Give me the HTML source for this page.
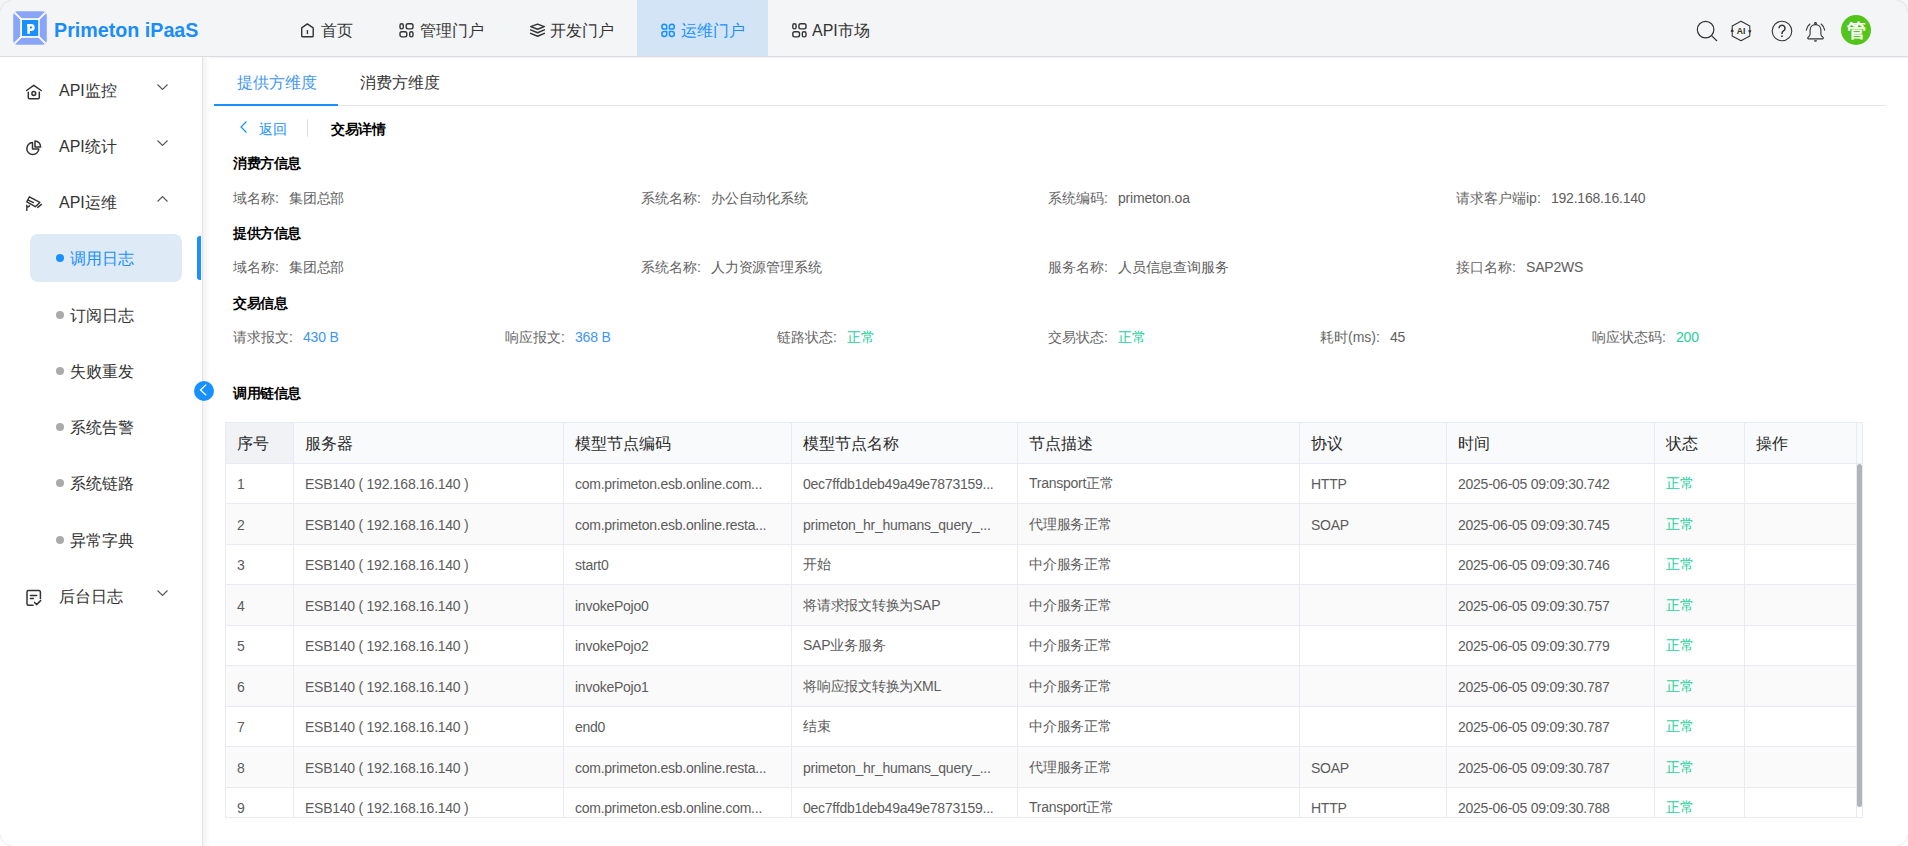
<!DOCTYPE html>
<html><head><meta charset="utf-8">
<style>
*{box-sizing:border-box;margin:0;padding:0}
html,body{width:1908px;height:846px;overflow:hidden;background:#fff;font-family:"Liberation Sans",sans-serif;color:#333}
.abs{position:absolute}
#hdr{position:absolute;left:0;top:0;width:1908px;height:57px;background:#f4f5f7;border-bottom:1px solid #dcdcde;box-shadow:0 1px 1px rgba(40,60,120,.06)}
.brand{position:absolute;left:54px;top:17px;font-weight:bold;font-size:19.7px;line-height:26px;color:#1a8cfb;white-space:nowrap}
.nav{position:absolute;top:0;height:56px;padding-top:4px!important;display:flex;align-items:center;font-size:16px;color:#333;white-space:nowrap}
.nav svg{display:block;margin-right:5px}
.nav.act{background:#d3e4f7;color:#1890ff}
#side{position:absolute;left:0;top:57px;width:202px;height:789px;background:#fff}
#sideb{position:absolute;left:202px;top:57px;width:8px;height:789px;background:linear-gradient(to right,#e3e3e3 0,#e3e3e3 1px,#f3f3f3 1px,#fff 8px)}
.mi{position:absolute;left:0;width:202px;height:24px;font-size:16px;line-height:24px;color:#333;white-space:nowrap}
.mi .ic{position:absolute;left:26px;top:4px}
.mi .tx{position:absolute;left:59px;top:1px}
.mi .chev{position:absolute;left:157px;top:6px}
.sub{position:absolute;left:30px;width:152px;height:48px;font-size:16px;line-height:48px;color:#333;white-space:nowrap;border-radius:8px}
.sub .dot{position:absolute;left:25.5px;top:20px;width:8px;height:8px;border-radius:50%;background:#aaa}
.sub .tx{position:absolute;left:40px;top:1px}
.sub.act{background:#dfeaf7;color:#1890ff}
.sub.act .dot{background:#1890ff}
.tab{position:absolute;top:71px;font-size:16px;line-height:24px;color:#333;white-space:nowrap}
.title{position:absolute;left:233px;font-size:14px;font-weight:bold;color:#000;line-height:21px;white-space:nowrap;transform:scale(.965);transform-origin:0 50%}
.fld{position:absolute;font-size:14px;line-height:20px;color:#666;white-space:nowrap}
.fld b{font-weight:normal;color:#5e5e5e;letter-spacing:-.2px}
.fld i.c{font-style:normal;display:inline-block;width:14px}
.blue{color:#3e95f5!important}
.green{color:#1dd09a!important}
#tbl{position:absolute;left:225px;top:422px;width:1638px;height:396px;border:1px solid #e8ebf3;overflow:hidden;background:#fff}
table{border-collapse:separate;border-spacing:0;table-layout:fixed;font-size:14px;color:#5c5c5c;width:1636px}
td,th{border-right:1px solid #e8ebf3;border-bottom:1px solid #e8ebf3;padding:0 0 0 11px;text-align:left;white-space:nowrap;overflow:hidden;font-weight:normal;vertical-align:middle}
td:last-child,th:last-child{border-right:0;padding:0}
th{height:41px;background:#f9fafb;font-size:16px;color:#2a2a2a;padding-top:2px}
td{letter-spacing:-.25px;padding-top:1px}
tr.h40 td{height:40px}
tr.h41 td{height:41px}
tr.odd td{background:#fafafa}
</style></head><body>

<div id="hdr">
  <svg class="abs" style="left:13px;top:11px" width="34" height="34" viewBox="0 0 34 34">
    <rect x="0.2" y="0.2" width="33.6" height="33.6" rx="4.5" fill="#8aa5f7"/>
    <path d="M1.6 1.6L32.4 32.4M32.4 1.6L1.6 32.4" stroke="#fbfcfd" stroke-width="2"/>
    <rect x="7.2" y="7.2" width="19.6" height="19.6" fill="#fbfcfd"/>
    <rect x="9" y="9" width="16.2" height="16" fill="#1890ff"/>
    <path d="M15.6 22.8V13" stroke="#fff" stroke-width="2.6"/>
    <path d="M14.5 14.2H18.2A2.3 2.3 0 0 1 18.2 18.8H15.6" fill="none" stroke="#fff" stroke-width="2.5"/>
  </svg>
  <div class="brand">Primeton iPaaS</div>

  <div class="nav" style="left:277px;padding:0 23px">
    <svg width="16" height="16" viewBox="0 0 16 16" fill="none" stroke="#333" stroke-width="1.4" stroke-linejoin="round" stroke-linecap="round"><path d="M1.7 5.9L7.3 1.9l5.9 4v8a.9.9 0 0 1-.9.9H2.6a.9.9 0 0 1-.9-.9z"/><path d="M7.4 8.6v3"/></svg><span style="position:relative;top:1px">首页</span></div>
  <div class="nav" style="left:376px;padding:0 23px">
    <svg width="16" height="16" viewBox="0 0 16 16" fill="none" stroke="#333" stroke-width="1.4"><rect x="1" y="1.8" width="3.3" height="5.1" rx="1.6"/><rect x="7.2" y="1.8" width="6.8" height="5.1" rx="1.8"/><rect x="1" y="9.7" width="6.8" height="5.2" rx="1.8"/><rect x="10.7" y="9.7" width="3.3" height="5.2" rx="1.6"/></svg><span style="position:relative;top:1px">管理门户</span></div>
  <div class="nav" style="left:506px;padding:0 23px">
    <svg width="16" height="16" viewBox="0 0 16 16" fill="none" stroke="#333" stroke-width="1.5" stroke-linejoin="round" stroke-linecap="round"><path d="M8.6 2.1L15.3 4.6 8.6 7.3 1.7 4.6z"/><path d="M1.7 7.9l6.9 2.8 6.7-2.8"/><path d="M1.7 11.4l6.9 2.9 6.7-2.9"/></svg><span style="position:relative;top:1px">开发门户</span></div>
  <div class="nav act" style="left:637px;width:131px;padding:0 23px 0 24px">
    <svg width="16" height="16" viewBox="0 0 16 16" fill="none" stroke="#1890ff" stroke-width="1.6" stroke-linejoin="round"><path d="M6.1 7H3.5A2.6 2.6 0 1 1 6.1 4.4z"/><path d="M9 7V4.4A2.6 2.6 0 1 1 11.6 7z"/><path d="M6.1 9.7v2.6A2.6 2.6 0 1 1 3.5 9.7z"/><path d="M9 9.7h2.6A2.6 2.6 0 1 1 9 12.3z"/></svg><span style="position:relative;top:1px">运维门户</span></div>
  <div class="nav" style="left:768px;padding:0 23px">
    <svg width="16" height="16" viewBox="0 0 16 16" fill="none" stroke="#333" stroke-width="1.4"><rect x="1.8" y="1.8" width="3.3" height="5.1" rx="1.6"/><rect x="7.9" y="1.8" width="7.1" height="5.1" rx="1.8"/><rect x="1.8" y="9.7" width="6.7" height="5.2" rx="1.8"/><rect x="11.3" y="9.7" width="3.7" height="5.2" rx="1.6"/></svg><span style="position:relative;top:1px">API市场</span></div>

  <!-- right icons -->
  <svg class="abs" style="left:1696px;top:20px" width="22" height="22" viewBox="0 0 22 22" fill="none" stroke="#333" stroke-width="1.2"><circle cx="9.6" cy="9.6" r="8.3"/><path d="M15.6 15.6L21 21"/></svg>
  <svg class="abs" style="left:1730px;top:20px" width="22" height="22" viewBox="0 0 22 22" fill="none" stroke="#333" stroke-width="1.05" stroke-linejoin="round">
    <path d="M2.2 9V6L11 1.2 19.8 6v5.5M19.8 13v3L11 20.8 2.2 16v-5.5"/>
    <path d="M1.2 11.3L2.2 9.3 3.2 11.3z" fill="#333"/>
    <path d="M18.8 10.7L19.8 12.7 20.8 10.7z" fill="#333"/>
    <text x="11" y="14.4" font-family="Liberation Sans" font-weight="bold" font-size="8.6" fill="#333" stroke="none" text-anchor="middle">AI</text></svg>
  <svg class="abs" style="left:1771px;top:20px" width="22" height="22" viewBox="0 0 22 22" fill="none" stroke="#333" stroke-width="1.1"><circle cx="11" cy="11" r="9.8"/><path d="M8 8.3a3 3 0 1 1 4.5 2.6c-1 .6-1.5 1.2-1.5 2.4v.8" stroke-width="1.5"/><circle cx="11" cy="16.2" r=".9" fill="#333" stroke="none"/></svg>
  <svg class="abs" style="left:1805px;top:21px" width="22" height="22" viewBox="0 0 22 22" fill="none" stroke="#333" stroke-width="1.1" stroke-linejoin="round" stroke-linecap="round">
    <path d="M10.5 3.6C7.4 3.6 5.1 5.9 5.1 9v4.3c0 1.3-.9 2.2-2 2.9-.7.5-.4 1.7.5 1.7h13.8c.9 0 1.2-1.2.5-1.7-1.1-.7-2-1.6-2-2.9V9c0-3.1-2.3-5.4-5.4-5.4z"/>
    <circle cx="10.5" cy="2.5" r=".9"/>
    <path d="M9 19.3h3a1.5 1.5 0 0 1-3 0z" fill="#333" stroke="none"/>
    <path d="M1.3 9.1Q2 5.3 4.9 3M19.7 9.1Q19 5.3 16.1 3"/></svg>
  <div class="abs" style="left:1841px;top:15px;width:30px;height:30px;border-radius:50%;background:#52c41a;color:#fff;font-weight:bold;font-size:19px;line-height:32px;text-align:center">管</div>
  <svg class="abs" style="left:0;top:0" width="14" height="14" fill="none" stroke="rgba(0,0,0,.05)" stroke-width="1.2"><path d="M0.6 11A10.5 10.5 0 0 1 11 0.6"/></svg>
  <svg class="abs" style="left:1894px;top:0" width="14" height="14" fill="none" stroke="rgba(0,0,0,.05)" stroke-width="1.2"><path d="M3 0.6A10.5 10.5 0 0 1 13.4 11"/></svg>
</div>

<div id="side">
  <div class="mi" style="top:21px"><svg class="ic" style="top:5.5px" width="16" height="16" viewBox="0 0 16 16" fill="none" stroke="#333" stroke-width="1.5" stroke-linejoin="round" stroke-linecap="round"><path d="M0.5 6.5L7.8 1.3l7.4 5.2"/><path d="M2.3 8.2v5.2a1.3 1.3 0 0 0 1.3 1.3h8.4a1.3 1.3 0 0 0 1.3-1.3V8.2"/><circle cx="7.8" cy="9.5" r="1.9"/></svg><span class="tx">API监控</span><svg class="chev" width="11" height="6" viewBox="0 0 11 6" fill="none" stroke="#555" stroke-width="1.1"><path d="M.5 .5l5 5 5-5"/></svg></div>
  <div class="mi" style="top:77px"><svg class="ic" style="top:5.5px" width="16" height="16" viewBox="0 0 16 16" fill="none" stroke="#333" stroke-width="1.5" stroke-linejoin="round"><path d="M6.5 2.6A6 6 0 1 0 12.8 9H6.5z"/><path d="M9 1v6h5.6A5.8 5.8 0 0 0 9 1z"/></svg><span class="tx">API统计</span><svg class="chev" width="11" height="6" viewBox="0 0 11 6" fill="none" stroke="#555" stroke-width="1.1"><path d="M.5 .5l5 5 5-5"/></svg></div>
  <div class="mi" style="top:133px"><svg class="ic" style="top:6px" width="17" height="16" viewBox="0 0 17 16" fill="none" stroke="#333" stroke-width="1.4" stroke-linejoin="round" stroke-linecap="round"><path d="M3.4 0.8L13.8 6.4 9.3 10.7 0.8 5.9z"/><path d="M2.2 4.2l5.3 2.4"/><path d="M11.7 11.4l3.8-3"/><path d="M0.8 9.2v5.2M0.8 11.4l2.4-1v-.9"/></svg><span class="tx">API运维</span><svg class="chev" width="11" height="6" viewBox="0 0 11 6" fill="none" stroke="#555" stroke-width="1.1"><path d="M.5 5.5l5-5 5 5"/></svg></div>
  <div class="sub act" style="top:177px"><span class="dot"></span><span class="tx">调用日志</span></div>
  <div class="sub" style="top:234px"><span class="dot"></span><span class="tx">订阅日志</span></div>
  <div class="sub" style="top:290px"><span class="dot"></span><span class="tx">失败重发</span></div>
  <div class="sub" style="top:346px"><span class="dot"></span><span class="tx">系统告警</span></div>
  <div class="sub" style="top:402px"><span class="dot"></span><span class="tx">系统链路</span></div>
  <div class="sub" style="top:459px"><span class="dot"></span><span class="tx">异常字典</span></div>
  <div class="mi" style="top:527px"><svg class="ic" style="top:5px" width="16" height="17" viewBox="0 0 16 17" fill="none" stroke="#333" stroke-width="1.5" stroke-linejoin="round" stroke-linecap="round"><path d="M14.4 9.6V3a1.5 1.5 0 0 0-1.5-1.5H2.5A1.5 1.5 0 0 0 1 3v11.8a1.5 1.5 0 0 0 1.5 1.5H7"/><path d="M4.4 6.4h6.3M4.4 9.5h3"/><path d="M8.6 13.4l2 2.2 4-4"/></svg><span class="tx">后台日志</span><svg class="chev" width="11" height="6" viewBox="0 0 11 6" fill="none" stroke="#555" stroke-width="1.1"><path d="M.5 .5l5 5 5-5"/></svg></div>
</div>
<div id="sideb"></div>
<div class="abs" style="left:197px;top:236px;width:4px;height:44px;border-radius:3px 0 0 3px;background:#1890ff"></div>
<div class="abs" style="left:194px;top:381px;width:20px;height:20px;border-radius:50%;background:#1890ff"><svg class="abs" style="left:0;top:0" width="20" height="20" viewBox="0 0 20 20" fill="none" stroke="#fff" stroke-width="1.3"><path d="M12.2 3.6L6.5 9l5.7 5.2"/></svg></div>


<!-- tabs -->
<div class="tab blue" style="left:237px;color:#1890ff">提供方维度</div>
<div class="tab" style="left:360px">消费方维度</div>
<div class="abs" style="left:214px;top:105px;width:1672px;height:1px;background:#e4e7ed"></div>
<div class="abs" style="left:214px;top:104px;width:124px;height:2px;background:#1890ff"></div>

<svg class="abs" style="left:239px;top:120px" width="10" height="14" viewBox="0 0 10 14" fill="none" stroke="#1890ff" stroke-width="1.2"><path d="M7.5 1.5L2 7l5.5 5.5"/></svg>
<div class="fld" style="left:259px;top:119px;color:#1890ff">返回</div>
<div class="abs" style="left:307px;top:119px;width:1px;height:18px;background:#dcdfe6"></div>
<div class="title" style="left:331px;top:119px">交易详情</div>

<div class="title" style="top:153px">消费方信息</div>
<div class="fld" style="left:233px;top:188px">域名称<i class="c">:</i><b>集团总部</b></div>
<div class="fld" style="left:641px;top:188px">系统名称<i class="c">:</i><b>办公自动化系统</b></div>
<div class="fld" style="left:1048px;top:188px">系统编码<i class="c">:</i><b>primeton.oa</b></div>
<div class="fld" style="left:1456px;top:188px">请求客户端ip<i class="c">:</i><b>192.168.16.140</b></div>

<div class="title" style="top:223px">提供方信息</div>
<div class="fld" style="left:233px;top:257px">域名称<i class="c">:</i><b>集团总部</b></div>
<div class="fld" style="left:641px;top:257px">系统名称<i class="c">:</i><b>人力资源管理系统</b></div>
<div class="fld" style="left:1048px;top:257px">服务名称<i class="c">:</i><b>人员信息查询服务</b></div>
<div class="fld" style="left:1456px;top:257px">接口名称<i class="c">:</i><b>SAP2WS</b></div>

<div class="title" style="top:293px">交易信息</div>
<div class="fld" style="left:233px;top:327px">请求报文<i class="c">:</i><b class="blue">430 B</b></div>
<div class="fld" style="left:505px;top:327px">响应报文<i class="c">:</i><b class="blue">368 B</b></div>
<div class="fld" style="left:777px;top:327px">链路状态<i class="c">:</i><b class="green">正常</b></div>
<div class="fld" style="left:1048px;top:327px">交易状态<i class="c">:</i><b class="green">正常</b></div>
<div class="fld" style="left:1320px;top:327px">耗时(ms)<i class="c">:</i><b>45</b></div>
<div class="fld" style="left:1592px;top:327px">响应状态码<i class="c">:</i><b class="green">200</b></div>

<div class="title" style="top:383px">调用链信息</div>

<div id="tbl">
<table>
<colgroup><col style="width:68px"><col style="width:270px"><col style="width:228px"><col style="width:226px"><col style="width:282px"><col style="width:147px"><col style="width:208px"><col style="width:90px"><col style="width:112px"><col style="width:5px"></colgroup>
<tr><th style="background:#f1f2f5">序号</th><th>服务器</th><th>模型节点编码</th><th>模型节点名称</th><th>节点描述</th><th>协议</th><th>时间</th><th>状态</th><th>操作</th><th></th></tr>
<tr class="h40"><td>1</td><td>ESB140 ( 192.168.16.140 )</td><td>com.primeton.esb.online.com...</td><td>0ec7ffdb1deb49a49e7873159...</td><td>Transport正常</td><td>HTTP</td><td>2025-06-05 09:09:30.742</td><td class="green">正常</td><td></td><td></td></tr>
<tr class="h41 odd"><td>2</td><td>ESB140 ( 192.168.16.140 )</td><td>com.primeton.esb.online.resta...</td><td>primeton_hr_humans_query_...</td><td>代理服务正常</td><td>SOAP</td><td>2025-06-05 09:09:30.745</td><td class="green">正常</td><td></td><td></td></tr>
<tr class="h40"><td>3</td><td>ESB140 ( 192.168.16.140 )</td><td>start0</td><td>开始</td><td>中介服务正常</td><td></td><td>2025-06-05 09:09:30.746</td><td class="green">正常</td><td></td><td></td></tr>
<tr class="h41 odd"><td>4</td><td>ESB140 ( 192.168.16.140 )</td><td>invokePojo0</td><td>将请求报文转换为SAP</td><td>中介服务正常</td><td></td><td>2025-06-05 09:09:30.757</td><td class="green">正常</td><td></td><td></td></tr>
<tr class="h40"><td>5</td><td>ESB140 ( 192.168.16.140 )</td><td>invokePojo2</td><td>SAP业务服务</td><td>中介服务正常</td><td></td><td>2025-06-05 09:09:30.779</td><td class="green">正常</td><td></td><td></td></tr>
<tr class="h41 odd"><td>6</td><td>ESB140 ( 192.168.16.140 )</td><td>invokePojo1</td><td>将响应报文转换为XML</td><td>中介服务正常</td><td></td><td>2025-06-05 09:09:30.787</td><td class="green">正常</td><td></td><td></td></tr>
<tr class="h40"><td>7</td><td>ESB140 ( 192.168.16.140 )</td><td>end0</td><td>结束</td><td>中介服务正常</td><td></td><td>2025-06-05 09:09:30.787</td><td class="green">正常</td><td></td><td></td></tr>
<tr class="h41 odd"><td>8</td><td>ESB140 ( 192.168.16.140 )</td><td>com.primeton.esb.online.resta...</td><td>primeton_hr_humans_query_...</td><td>代理服务正常</td><td>SOAP</td><td>2025-06-05 09:09:30.787</td><td class="green">正常</td><td></td><td></td></tr>
<tr class="h40"><td>9</td><td>ESB140 ( 192.168.16.140 )</td><td>com.primeton.esb.online.com...</td><td>0ec7ffdb1deb49a49e7873159...</td><td>Transport正常</td><td>HTTP</td><td>2025-06-05 09:09:30.788</td><td class="green">正常</td><td></td><td></td></tr>

</table>
</div>
<div class="abs" style="left:1857px;top:464px;width:5px;height:343px;border-radius:3px;background:#b3b4b9"></div>

<svg class="abs" style="left:0;top:832px" width="14" height="14" fill="none" stroke="rgba(0,0,0,.06)" stroke-width="1.2"><path d="M0.6 3A10.5 10.5 0 0 0 11 13.4"/></svg>
<svg class="abs" style="left:1894px;top:832px" width="14" height="14" fill="none" stroke="rgba(0,0,0,.06)" stroke-width="1.2"><path d="M3 13.4A10.5 10.5 0 0 0 13.4 3"/></svg>
</body></html>
